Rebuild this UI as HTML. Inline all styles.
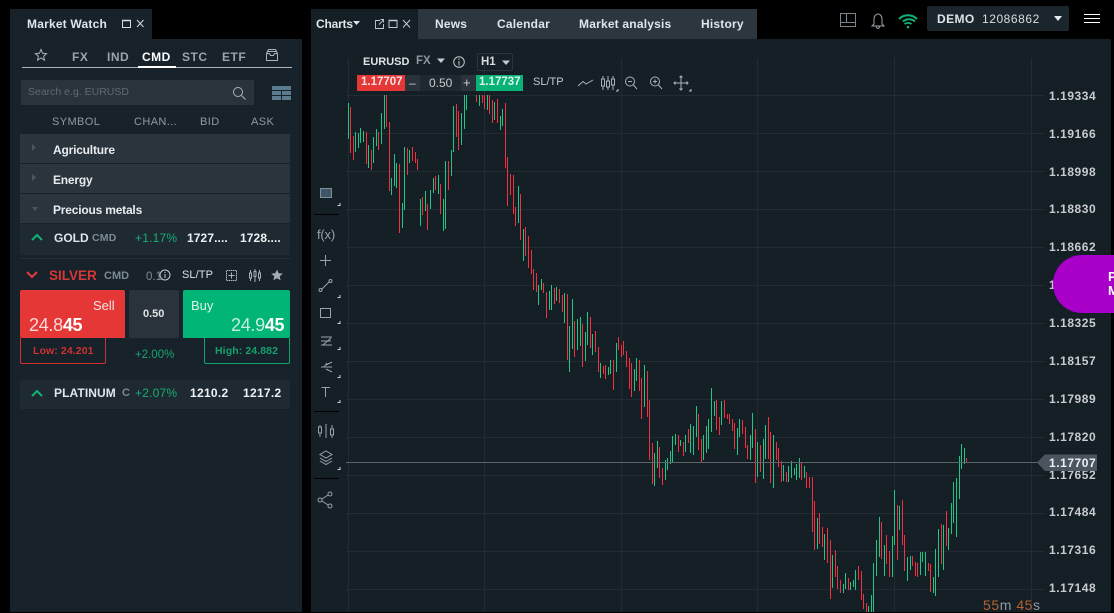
<!DOCTYPE html>
<html><head><meta charset="utf-8"><style>
*{box-sizing:border-box;margin:0;padding:0}
html,body{width:1114px;height:612px;overflow:hidden;background:#000;font-family:"Liberation Sans",sans-serif;color:#fff}
.a{position:absolute;white-space:nowrap}
.panel{background-color:#17222a;background-image:radial-gradient(#121a20 0.6px,transparent 0.8px);background-size:4px 4px}
.chart{background-color:#151f26;background-image:radial-gradient(#10181e 0.6px,transparent 0.8px);background-size:4px 4px}
.b{font-weight:bold}
.grp{position:absolute;left:20px;width:270px;height:29px;background:#2a343c;font-size:12px;font-weight:bold;color:#e8ecef;line-height:32px;padding-left:33px;letter-spacing:-.2px}
.hd{font-size:11px;color:#8f9aa3;letter-spacing:.4px;top:116px}
.tb{font-size:12px;font-weight:bold;top:50px;color:#9aa3aa;letter-spacing:.5px}
.tab{font-size:12px;font-weight:bold;color:#dfe5ea;top:17px;letter-spacing:.2px}
.pl{position:absolute;left:1049px;font-size:12px;font-weight:bold;color:#c8ccd0;letter-spacing:.55px}
</style></head><body>

<div class="a panel" style="left:10px;top:9px;width:142px;height:31px"></div>
<div class="a panel" style="left:10px;top:39px;width:292px;height:573px"></div>
<div class="a" style="left:27px;top:17px;font-size:12px;font-weight:bold;color:#dfe6ea;letter-spacing:.2px">Market Watch</div>
<svg class="a" style="left:120px;top:18px" width="28" height="12" fill="none" stroke="#d4dade"><rect x="2.500" y="2.500" width="8" height="7"/><path d="M2 2.500H11" stroke-width="1.500"/><path d="M17 2L23.500 9M23.500 2L17 9"/></svg>

<svg class="a" style="left:33px;top:47px" width="16" height="16" fill="none" stroke="#a9b2b9"><path d="M8 2.500L9.600 6.300 13.600 6.600 10.600 9.200 11.500 13.200 8 11 4.500 13.200 5.400 9.200 2.400 6.600 6.400 6.300Z"/></svg>
<div class="a tb" style="left:72px">FX</div>
<div class="a tb" style="left:107px">IND</div>
<div class="a tb" style="left:142px;color:#fff">CMD</div>
<div class="a tb" style="left:182px">STC</div>
<div class="a tb" style="left:222px">ETF</div>
<svg class="a" style="left:265px;top:47px" width="14" height="15" fill="none" stroke="#a9b2b9"><path d="M1.500 6.500L3.500 2.500H10.500L12.500 6.500V13.500H1.500ZM1.500 6.500H4.500L5.500 8.500H8.500L9.500 6.500H12.500M3 4.500H11"/></svg>
<div class="a" style="left:22px;top:67px;width:270px;height:1px;background:#aeb5ba"></div>
<div class="a" style="left:138px;top:66px;width:38px;height:2px;background:#fff"></div>

<div class="a" style="left:21px;top:80px;width:233px;height:25px;background:#2a333b"></div>
<div class="a" style="left:28px;top:86px;font-size:10.500px;color:#5f6a72">Search e.g. EURUSD</div>
<svg class="a" style="left:231px;top:85px" width="16" height="16" fill="none" stroke="#a9b2b9"><circle cx="7" cy="7" r="4.500"/><path d="M10.500 10.500L14.500 14.500"/></svg>
<svg class="a" style="left:272px;top:86px" width="19" height="14" fill="#5b7b8e"><rect width="19" height="4"/><rect y="5" width="9" height="4"/><rect x="10" y="5" width="9" height="4"/><rect y="10" width="9" height="4"/><rect x="10" y="10" width="9" height="4"/></svg>

<div class="a hd" style="left:52px">SYMBOL</div>
<div class="a hd" style="left:134px">CHAN...</div>
<div class="a hd" style="left:200px">BID</div>
<div class="a hd" style="left:251px">ASK</div>

<div class="grp" style="top:134px">Agriculture</div>
<div class="grp" style="top:164px">Energy</div>
<div class="grp" style="top:194px">Precious metals</div>
<svg class="a" style="left:30px;top:143px" width="10" height="72" fill="#4a555d"><path d="M2 1L6 4.500 2 8ZM2 31L6 34.500 2 38ZM2 64H8L5 68Z"/></svg>

<!-- GOLD -->
<div class="a" style="left:20px;top:224px;width:270px;height:31px;background:#1e2931"></div>
<div class="a" style="left:20px;top:258px;width:270px;height:1px;background:#252f37"></div>
<svg class="a" style="left:30px;top:232px" width="14" height="10" fill="none" stroke="#10b577" stroke-width="2"><path d="M2 8L7 3 12 8"/></svg>
<div class="a b" style="left:54px;top:231px;font-size:12px;color:#dfe5ea">GOLD</div>
<div class="a" style="left:92px;top:232px;font-size:10.500px;font-weight:bold;color:#7d8a94;letter-spacing:.2px">CMD</div>
<div class="a" style="left:135px;top:231px;font-size:12px;color:#19ae73;letter-spacing:.2px">+1.17%</div>
<div class="a b" style="left:187px;top:231px;font-size:12px;color:#eef1f3;letter-spacing:.1px">1727....</div>
<div class="a b" style="left:240px;top:231px;font-size:12px;color:#eef1f3;letter-spacing:.1px">1728....</div>

<!-- SILVER -->
<svg class="a" style="left:25px;top:270px" width="14" height="10" fill="none" stroke="#e03a3a" stroke-width="2"><path d="M2 2L7 7 12 2"/></svg>
<div class="a b" style="left:49px;top:268px;font-size:13.500px;color:#d93636">SILVER</div>
<div class="a b" style="left:104px;top:270px;font-size:11px;color:#7d8a94">CMD</div>
<div class="a" style="left:146px;top:271px;font-size:11.500px;color:#7f8a92">0.1</div>
<svg class="a" style="left:158px;top:268px" width="14" height="14" fill="none" stroke="#c3c9ce"><circle cx="7" cy="7" r="5"/><path d="M7 6V10M7 4V5"/></svg>
<div class="a" style="left:182px;top:269px;font-size:11px;color:#dde2e6;letter-spacing:.1px">SL/TP</div>
<svg class="a" style="left:225px;top:269px" width="14" height="14" fill="none" stroke="#a9b2b9"><rect x="1.500" y="1.500" width="10" height="10" stroke-dasharray="1.500 .5"/><path d="M6.500 3.500V9.500M3.500 6.500H9.500"/></svg>
<svg class="a" style="left:248px;top:269px" width="14" height="14" fill="none" stroke="#a9b2b9"><path d="M2.500 1V12M7 0V13M11.500 1V12"/><rect x="1.500" y="4" width="2" height="5" fill="#17222a"/><rect x="6" y="2.500" width="2" height="5" fill="#17222a"/><rect x="10.500" y="4" width="2" height="5" fill="#17222a"/></svg>
<svg class="a" style="left:270px;top:268px" width="14" height="14" fill="#a4adb4"><path d="M7 1.500L8.700 5.200 12.800 5.600 9.700 8.300 10.600 12.300 7 10.200 3.400 12.300 4.300 8.300 1.200 5.600 5.300 5.200Z"/></svg>

<div class="a" style="left:20px;top:290px;width:105px;height:48px;background:#e63737;border-radius:2px 2px 0 2px"></div>
<div class="a" style="left:93px;top:298px;font-size:13px;color:#f4e4e4">Sell</div>
<div class="a" style="left:29px;top:315px;font-size:18px;color:#fbd9d9;letter-spacing:-.3px">24.8<span style="font-weight:bold;color:#fff">45</span></div>
<div class="a" style="left:129px;top:290px;width:50px;height:48px;background:#2a333b;border-radius:2px"></div>
<div class="a b" style="left:143px;top:308px;font-size:11px;color:#dfe3e6">0.50</div>
<div class="a" style="left:183px;top:290px;width:107px;height:48px;background:#00b576;border-radius:2px 2px 2px 0"></div>
<div class="a" style="left:191px;top:298px;font-size:13px;color:#dff3ea">Buy</div>
<div class="a" style="left:231px;top:315px;font-size:18px;color:#c4eedd;letter-spacing:-.3px">24.9<span style="font-weight:bold;color:#fff">45</span></div>

<div class="a" style="left:20px;top:338px;width:86px;height:26px;border:1px solid #cf3232;border-top:0;border-radius:0 0 2px 2px"></div>
<div class="a b" style="left:33px;top:345px;font-size:10.500px;color:#cf3232;letter-spacing:.1px">Low: 24.201</div>
<div class="a" style="left:135px;top:349px;font-size:11.500px;color:#18a56e">+2.00%</div>
<div class="a" style="left:204px;top:338px;width:86px;height:26px;border:1px solid #09a56c;border-top:0;border-radius:0 0 2px 2px"></div>
<div class="a b" style="left:215px;top:345px;font-size:10.500px;color:#14a26c;letter-spacing:.1px">High: 24.882</div>

<!-- PLATINUM -->
<div class="a" style="left:20px;top:380px;width:270px;height:29px;background:#1e2931"></div>
<svg class="a" style="left:30px;top:388px" width="14" height="10" fill="none" stroke="#10b577" stroke-width="2"><path d="M2 8L7 3 12 8"/></svg>
<div class="a b" style="left:54px;top:386px;font-size:12px;color:#dfe5ea;letter-spacing:.1px">PLATINUM</div>
<div class="a b" style="left:122px;top:387px;font-size:11px;color:#7d8a94">C</div>
<div class="a" style="left:135px;top:386px;font-size:12px;color:#19ae73;letter-spacing:.2px">+2.07%</div>
<div class="a b" style="left:190px;top:386px;font-size:12px;color:#eef1f3;letter-spacing:.3px">1210.2</div>
<div class="a b" style="left:243px;top:386px;font-size:12px;color:#eef1f3;letter-spacing:.3px">1217.2</div>

<!-- CHART PANEL -->
<div class="a chart" style="left:311px;top:9px;width:107px;height:31px"></div>
<div class="a chart" style="left:311px;top:39px;width:800px;height:573px"></div>
<div class="a" style="left:418px;top:9px;width:339px;height:30px;background:#2b363e"></div>
<div class="a b" style="left:316px;top:17px;font-size:12px;color:#dfe5ea;letter-spacing:-.2px">Charts</div>
<svg class="a" style="left:352px;top:20px" width="9" height="6" fill="#dfe5ea"><path d="M1 1H8L4.500 5Z"/></svg>
<svg class="a" style="left:373px;top:18px" width="40" height="12" fill="none" stroke="#c3cad0"><path d="M7 2.500H2.500V10.500H10.500V6M6 6.500L10.500 2M7.500 1.500H10.500V4.500" stroke-width=".9"/><rect x="16" y="2.500" width="8" height="7"/><path d="M15.500 2.500H24.500" stroke-width="1.500"/><path d="M30 2L37 9.500M37 2L30 9.500"/></svg>
<div class="a tab" style="left:435px">News</div>
<div class="a tab" style="left:497px">Calendar</div>
<div class="a tab" style="left:579px">Market analysis</div>
<div class="a tab" style="left:701px">History</div>

<!-- Top right -->
<svg class="a" style="left:838px;top:10px" width="80" height="20" fill="none" stroke="#75848e"><path d="M2.500 3.500H17.500V16.500H2.500ZM8.500 3.500V12.500H2.500M8.500 12.500H17.500"/><path d="M36 14V9C36 6 38 4 40 4S44 6 44 9V14L46 16H34ZM38.500 16.500C38.500 19 41.500 19 41.500 16.500" stroke="#9aa5ad"/><path d="M61 9C66 4 74 4 79 9" stroke="#10b577" stroke-width="2"/><path d="M63 11.500C66.500 8.500 71.500 8.500 75 11.500" stroke="#10b577" stroke-width="2" transform="translate(2 0)"/><path d="M67.500 14C69.500 12.500 72.500 12.500 74.500 14" stroke="#10b577" stroke-width="1.800" transform="translate(-1 0)"/><circle cx="70" cy="17" r="1.300" fill="#10b577" stroke="none"/></svg>
<div class="a" style="left:927px;top:6px;width:142px;height:25px;background:#1a252c;border-radius:2px"></div>
<div class="a b" style="left:937px;top:12px;font-size:12px;color:#dde5ea;letter-spacing:.4px">DEMO</div>
<div class="a" style="left:982px;top:12px;font-size:12px;color:#d7dde1;letter-spacing:.55px">12086862</div>
<svg class="a" style="left:1053px;top:15px" width="10" height="7" fill="#e7ebee"><path d="M1 1H9L5 6Z"/></svg>
<svg class="a" style="left:1083px;top:13px" width="18" height="12" stroke="#fff"><path d="M1 1.500H17M1 5.500H17M1 9.500H17"/></svg>

<!-- Grid, candles -->
<svg class="a" style="left:0;top:0" width="1114" height="612" fill="none">
<path stroke="#222b31" d="M348.500 58V612M484.500 58V612M621.500 58V612M757.500 58V612M894.500 58V612M1031.500 58V612"/>
<path stroke="#222b31" d="M346 95.500H1045M346 133.500H1045M346 171.500H1045M346 209.500H1045M346 247.500H1045M346 285.500H1045M346 323.500H1045M346 361.500H1045M346 399.500H1045M346 437.500H1045M346 475.500H1045M346 513.500H1045M346 551.500H1045M346 589.500H1045"/>
<path stroke="#1fc685" stroke-width="1.100" shape-rendering="crispEdges" d="M348.300 103V139M355.300 132V152M358.300 133V148M360.300 128V143M363.300 131V142M368.300 145V168M373.300 137V163M376.300 129V146M381.300 113V144M384.300 95V129M391.300 178V195M394.300 154V186M396.300 163V188M402.300 203V228M404.300 147V210M409.300 150V163M420.300 199V226M425.300 191V211M430.300 190V209M433.300 178V193M438.300 175V194M443.300 199V231M445.300 161V229M451.300 150V176M453.300 106V152M461.300 113V145M464.300 95V129M466.300 95V110M479.300 95V106M487.300 95V110M494.300 102V120M500.300 116V130M502.300 109V126M518.300 186V223M523.300 229V261M538.300 285V305M541.300 279V290M549.300 291V310M551.300 285V310M556.300 287V301M564.300 293V323M569.300 326V372M572.300 299V349M577.300 319V350M580.300 317V346M585.300 332V361M587.300 312V345M592.300 334V355M600.300 363V378M608.300 367V375M610.300 360V374M616.300 343V372M634.300 369V391M636.300 358V381M644.300 365V407M654.300 453V486M657.300 441V468M665.300 460V480M667.300 458V470M670.300 451V464M672.300 436V463M675.300 434V445M680.300 440V446M685.300 435V452M690.300 424V453M693.300 426V455M696.300 406V437M703.300 435V460M706.300 426V453M708.300 419V449M711.300 388V432M714.300 401V416M721.300 401V425M737.300 428V455M739.300 419V437M750.300 435V460M752.300 413V448M757.300 442V477M763.300 439V479M765.300 425V459M773.300 435V488M783.300 465V481M788.300 466V482M791.300 461V478M794.300 468V475M796.300 464V480M799.300 458V478M804.300 466V478M817.300 518V549M824.300 534V560M832.300 555V588M845.300 573V589M843.300 584V593M850.300 582V590M853.300 580V587M855.300 570V590M868.300 606V612M871.300 595V612M873.300 563V612M876.300 540V576M879.300 517V557M884.300 545V576M892.300 536V577M894.300 490V545M899.300 506V530M907.300 557V581M910.300 556V570M920.300 552V575M922.300 552V562M925.300 552V576M933.300 577V593M935.300 549V596M938.300 529V577M943.300 525V570M948.300 528V550M951.300 503V534M953.300 482V523M956.300 478V537M959.300 456V499M961.300 444V469M964.300 448V464"/>
<path stroke="#f2303f" stroke-width="1.100" shape-rendering="crispEdges" d="M350.300 107V153M353.300 136V160M366.300 132V164M371.300 150V170M378.300 132V150M386.300 95V127M389.300 122V191M399.300 164V233M407.300 148V175M412.300 147V161M415.300 152V163M417.300 159V170M422.300 197V215M427.300 204V230M435.300 176V190M440.300 184V214M448.300 161V190M456.300 104V137M458.300 111V150M476.300 95V102M482.300 95V103M484.300 95V109M489.300 95V114M492.300 100V123M497.300 99V123M505.300 103V168M507.300 157V206M510.300 174V195M513.300 175V214M515.300 207V226M520.300 194V240M525.300 227V256M528.300 236V268M531.300 250V274M533.300 269V290M536.300 273V292M543.300 283V293M546.300 292V318M554.300 288V304M559.300 289V303M562.300 295V312M567.300 294V360M574.300 321V357M582.300 324V367M590.300 317V348M595.300 331V352M598.300 347V372M603.300 366V374M605.300 365V379M613.300 360V390M618.300 337V350M621.300 345V357M623.300 341V355M626.300 351V367M629.300 358V389M631.300 363V397M639.300 360V391M641.300 378V419M647.300 371V417M649.300 400V460M652.300 443V484M659.300 447V478M662.300 468V485M678.300 435V452M683.300 442V456M688.300 429V443M698.300 414V450M701.300 439V462M716.300 400V430M719.300 417V435M724.300 400V418M727.300 414V419M729.300 414V424M732.300 419V431M734.300 423V449M742.300 420V434M745.300 427V448M747.300 445V459M755.300 429V483M760.300 445V472M768.300 417V459M770.300 432V483M776.300 442V460M778.300 448V467M781.300 461V482M786.300 472V482M801.300 462V480M806.300 472V488M809.300 477V488M812.300 477V532M814.300 501V550M819.300 513V544M822.300 527V547M827.300 528V563M830.300 540V599M835.300 550V577M837.300 566V589M840.300 580V593M848.300 578V590M858.300 566V580M861.300 571V600M863.300 594V609M866.300 603V612M881.300 522V559M886.300 535V564M889.300 551V577M897.300 505V560M902.300 500V545M904.300 535V571M912.300 556V566M915.300 562V576M917.300 563V577M928.300 563V571M930.300 564V592M941.300 524V564M946.300 511V546M966.300 458V462"/>
<path stroke="#5b6469" stroke-width="1" d="M346 462.500H1040"/>
</svg>

<!-- Chart header -->
<div class="a b" style="left:363px;top:56px;font-size:11px;color:#dde3e7">EURUSD</div>
<div class="a b" style="left:416px;top:55px;font-size:11.500px;color:#8c979f">FX</div>
<svg class="a" style="left:436px;top:58px" width="10" height="6" fill="#c3cad0"><path d="M1 0.500H9L5 5Z"/></svg>
<svg class="a" style="left:452px;top:55px" width="14" height="14" fill="none" stroke="#c3c9ce"><circle cx="7" cy="7" r="5.300"/><path d="M7 6V10.500M7 3.500V5"/></svg>
<div class="a" style="left:477px;top:53px;width:36px;height:18px;border:1px solid #2a343b;border-radius:2px"></div>
<div class="a b" style="left:481px;top:56px;font-size:11.500px;color:#d5dbdf">H1</div>
<svg class="a" style="left:501px;top:60px" width="10" height="6" fill="#c3cad0"><path d="M1 0.500H9L5 5Z"/></svg>

<div class="a" style="left:357px;top:75px;width:48px;height:16px;background:#e63737"></div>
<div class="a b" style="left:361px;top:76px;font-size:11.500px;color:#f5e3e3">1.17707</div>
<div class="a" style="left:405px;top:75px;width:71px;height:16px;background:#2a333b"></div>
<div class="a" style="left:420px;top:75px;width:41px;height:16px;background:#1f282f"></div>
<div class="a" style="left:409px;top:76px;font-size:12px;color:#c8ced2">–</div>
<div class="a" style="left:429px;top:76px;font-size:12px;color:#c8ced2">0.50</div>
<div class="a" style="left:463px;top:75px;font-size:13px;color:#c8ced2">+</div>
<div class="a" style="left:476px;top:75px;width:47px;height:16px;background:#08b277"></div>
<div class="a b" style="left:479px;top:76px;font-size:11.500px;color:#dff3ea">1.17737</div>
<div class="a" style="left:533px;top:76px;font-size:11px;color:#c3cad0">SL/TP</div>
<svg class="a" style="left:575px;top:74px" width="120" height="20" fill="none" stroke="#a9b2b9">
<path d="M3 12L8 7.500 11 10 18 6"/>
<path d="M28 2V16M33 2V16M38 2V16" /><rect x="26.500" y="5" width="3" height="7" fill="#151f26"/><rect x="31.500" y="7" width="3" height="6" fill="#151f26"/><rect x="36.500" y="5" width="3" height="6" fill="#151f26"/>
<circle cx="55" cy="7.500" r="4.500"/><path d="M58.500 11L62 15M53 7.500H57"/>
<circle cx="80" cy="7.500" r="4.500"/><path d="M83.500 11L87 15M78 7.500H82M80 5.500V9.500"/>
<path d="M106 2V16M99 9H113M104.500 3.500L106 2 107.500 3.500M104.500 14.500L106 16 107.500 14.500M100.500 7.500L99 9 100.500 10.500M111.500 7.500L113 9 111.500 10.500"/>
<path d="M41 17H43V15M114 17H116V15" stroke="#c3cad0"/></svg>

<!-- Left toolbar -->
<div class="a" style="left:317px;top:227px;font-size:13px;color:#98a3aa;letter-spacing:-.2px">f(x)</div>
<svg class="a" style="left:312px;top:180px" width="30" height="330" fill="none" stroke="#98a3aa">
<rect x="8.500" y="8.500" width="11" height="9" stroke="#7f9098" fill="#3d5566"/>
<path d="M2 34.500H27M2 231.500H27M2 298.500H27" stroke="#000"/>
<path d="M13.500 75V86M8 80.500H19"/>
<circle cx="8.500" cy="110" r="1.500"/><circle cx="18.500" cy="101" r="1.500"/><path d="M10 109L17 102"/>
<rect x="8.500" y="128.500" width="10" height="9"/>
<path d="M9 157H20M9 165H20M11 165L19 158M9 161H19"/>
<path d="M9 187H14M14 185L20 182M14 187H20M14 189L20 192M12 187L15 183"/>
<path d="M9.500 207.500H18M13.500 207.500V217"/>
<path d="M8 245V257M14 244V258M20 245V258"/><rect x="6.500" y="247" width="3" height="6" fill="#151f26"/><rect x="18.500" y="249" width="3" height="6" fill="#151f26"/>
<path d="M14 271L20 274.500 14 278 8 274.500ZM8 278L14 281.500 20 278M8 281L14 284.500 20 281"/>
<circle cx="8" cy="320" r="2"/><circle cx="18" cy="314" r="2"/><circle cx="18" cy="326" r="2"/><path d="M10 319L16 315M10 321L16 325"/>
<path d="M28 23V25.500H25.500M28 115V117.500H25.500M28 141V143.500H25.500M28 167V169.500H25.500M28 195V197.500H25.500M28 220V222.500H25.500M28 287V289.500H25.500" stroke="#cfd5d9"/>
</svg>

<!-- price labels -->
<div class="pl" style="top:89px">1.19334</div>
<div class="pl" style="top:127px">1.19166</div>
<div class="pl" style="top:165px">1.18998</div>
<div class="pl" style="top:202px">1.18830</div>
<div class="pl" style="top:240px">1.18662</div>
<div class="pl" style="top:278px">1</div>
<div class="pl" style="top:316px">1.18325</div>
<div class="pl" style="top:354px">1.18157</div>
<div class="pl" style="top:392px">1.17989</div>
<div class="pl" style="top:430px">1.17820</div>
<div class="pl" style="top:468px">1.17652</div>
<div class="pl" style="top:505px">1.17484</div>
<div class="pl" style="top:543px">1.17316</div>
<div class="pl" style="top:581px">1.17148</div>
<svg class="a" style="left:1036px;top:454px" width="62" height="18" fill="#4a5560"><path d="M1 8.500L9 0.500H61V17H9Z"/></svg>
<div class="pl" style="top:456px;color:#eef1f3">1.17707</div>
<div class="a" style="left:983px;top:597px;font-size:14px;color:#8f989e;letter-spacing:.55px"><span style="color:#b5622f">55</span>m <span style="color:#b5622f">45</span>s</div>

<!-- promo pill -->
<div class="a" style="left:1053px;top:255px;width:70px;height:58px;background:#a800c8;border-radius:29px 0 0 29px"></div>
<div class="a b" style="left:1108px;top:270px;font-size:13px;line-height:14px;color:#fff">P<br>M</div>

</body></html>
